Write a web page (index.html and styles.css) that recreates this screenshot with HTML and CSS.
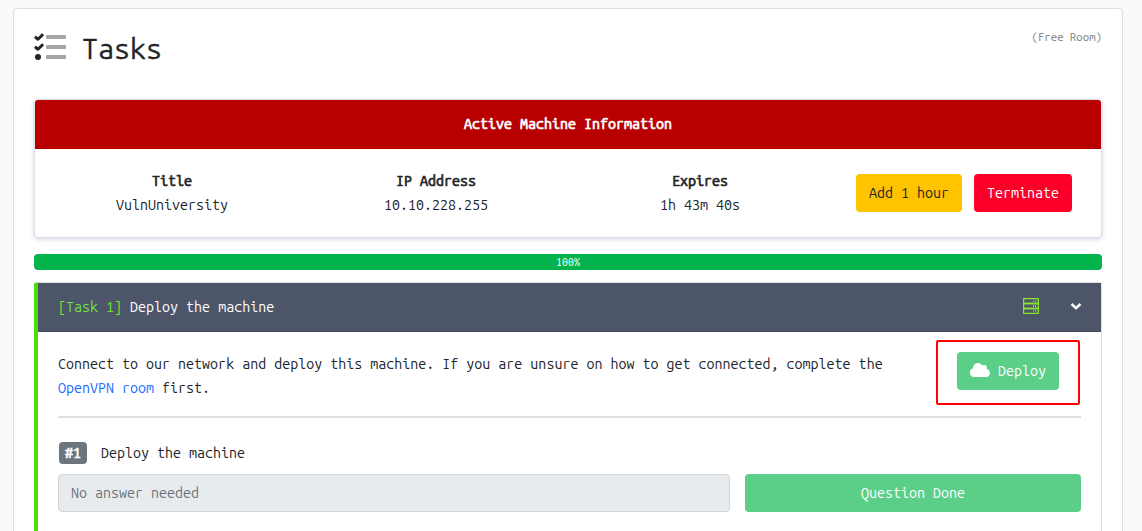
FILE: index.html
```html
<!DOCTYPE html>
<html lang="en">
<head>
<meta charset="utf-8">
<title>Tasks</title>
<link rel="stylesheet" href="styles.css">
</head>
<body>
<main class="room">
  <header class="room-head">
    <svg class="tasks-icon" width="34" height="28" viewBox="0 0 34 28">
      <g fill="#a6a6a6"><rect x="12" y="2" width="20" height="4" rx=".8"/><rect x="12" y="12" width="20" height="4" rx=".8"/><rect x="12" y="22" width="20" height="4" rx=".8"/></g>
      <g fill="none" stroke="#212529" stroke-width="3" stroke-linejoin="round"><path d="M.9 3.8 4 6.2 9.1 1.2"/><path d="M.9 13.8 4 16.2 9.1 11.2"/></g>
      <circle cx="4" cy="24" r="3" fill="#212529"/>
    </svg>
    <h1 class="room-title">Tasks</h1>
    <span class="room-type">(Free Room)</span>
  </header>

  <section class="machine">
    <div class="machine-head">Active Machine Information</div>
    <div class="machine-body">
      <div class="fact"><b>Title</b><span>VulnUniversity</span></div>
      <div class="fact"><b>IP Address</b><span>10.10.228.255</span></div>
      <div class="fact"><b>Expires</b><span>1h 43m 40s</span></div>
      <div class="machine-actions">
        <button class="btn btn-warning">Add 1 hour</button>
        <button class="btn btn-danger">Terminate</button>
      </div>
    </div>
  </section>

  <div class="progress">100%</div>

  <section class="task">
    <div class="task-head">
      <span><span class="task-no">[Task 1]</span> Deploy the machine</span>
      <svg class="server-icon" width="16" height="16" viewBox="0 0 16 16">
        <g fill="none" stroke="#8ae62c" stroke-width="1.3"><rect x=".6" y=".6" width="14.8" height="4.9" rx=".5"/><rect x=".6" y="5.5" width="14.8" height="5" rx=".5"/><rect x=".6" y="10.5" width="14.8" height="4.9" rx=".5"/></g>
        <g fill="#8ae62c"><path d="M10 2.6h1.2v1.2H10zM12 2.6h1.2v1.2H12zM10 7h1v2.2h-1zM12 7h1v2.2h-1zM10 12.2h1.2v1.2H10zM12 12.2h1.2v1.2H12z"/></g>
      </svg>
      <svg class="chevron" width="12" height="8" viewBox="0 0 12 8"><path d="M1.5 2 6 6.1 10.5 2" fill="none" stroke="#fff" stroke-width="2.6"/></svg>
    </div>
    <div class="task-body">
      <div class="intro">
        <p class="intro-text">Connect to our network and deploy this machine. If you are unsure on how to get connected, complete the <a class="link" href="#">OpenVPN room</a> first.</p>
        <div class="deploy">
          <button class="btn btn-success btn-deploy">
            <svg width="20" height="14" viewBox="0 0 20 14"><path fill="#fff" d="M16.8 6.1c.2-.4.2-.8.2-1.2a3 3 0 0 0-4.7-2.4A5 5 0 0 0 3 5v.2A4.5 4.5 0 0 0 4.5 14H16a4 4 0 0 0 .8-7.9z"/></svg>
            Deploy
          </button>
          <span class="marker"></span>
        </div>
      </div>
      <div class="question"><span class="badge">#1</span><span>Deploy the machine</span></div>
      <div class="answer">
        <input class="field" placeholder="No answer needed" disabled>
        <button class="btn btn-success">Question Done</button>
      </div>
    </div>
  </section>
</main>
</body>
</html>
```
FILE: styles.css
```css
* { box-sizing: border-box; }
body {
  margin: 0;
  padding: 8px 19px 0 13px;
  background: #fafafa;
  color: #212529;
  font: 14.3px/24px "Ubuntu Mono", "DejaVu Sans Mono", monospace;
}
.room {
  height: 523px;
  padding: 20px 20px 0;
  background: #fff;
  border: 1px solid #dfdfdf;
  border-bottom: 0;
  border-radius: 4px 4px 0 0;
}
.room-head { display: flex; height: 70px; align-items: flex-start; }
.tasks-icon { margin-top: 4px; }
.room-title {
  margin: 0 0 0 14px;
  font-size: 28.6px;
  font-weight: 400;
  line-height: 38px;
  -webkit-text-stroke: .3px;
}
.room-type { margin-left: auto; margin-top: -4px; color: #7d7d7d; font-size: 11.45px; }
.machine {
  border: 1px solid #dfdfe4;
  border-radius: 4px;
  box-shadow: 0 1px 4px rgba(60, 70, 140, .25);
}
.machine-head,
.fact b,
.badge {
  font-weight: 400;
  -webkit-text-stroke: .7px;
}
.machine-head {
  height: 49px;
  line-height: 49px;
  background: #b80000;
  border-radius: 3px 3px 0 0;
  color: #fff;
  text-align: center;
}
.machine-body { display: grid; grid-template-columns: repeat(4, 1fr); height: 88px; padding: 20px 5px; }
.fact { display: flex; flex-direction: column; align-items: center; }
.machine-actions { display: flex; justify-content: center; gap: 12px; padding-top: 5px; }
.btn {
  height: 38px;
  padding: 0 13px;
  border: 0;
  border-radius: 4px;
  color: #fff;
  font: inherit;
  white-space: nowrap;
}
.btn-warning { background: #ffc300; color: #212529; }
.btn-danger { background: #fc0029; }
.btn-success { background: #5bce88; }
.progress {
  height: 16px;
  margin: 16px 0 12px;
  background: #03b34b;
  border-radius: 4px;
  color: #fff;
  font-size: 10.714px;
  line-height: 17px;
  text-align: center;
}
.task {
  height: 249px;
  border: 1px solid #dfdfdf;
  border-bottom: 0;
  border-left: 4px solid #4cdc0a;
  border-radius: 3px 3px 0 0;
}
.task-head {
  display: flex;
  align-items: center;
  height: 49px;
  padding: 0 19px 0 20px;
  background: #4d5569;
  border-bottom: 1px solid #434b60;
  color: #fff;
}
.task-no { color: #70e43c; }
.server-icon { margin: -2px 31px 0 auto; }
.chevron { margin-top: -2px; }
.task-body { padding: 20px 20px 0; }
.intro {
  display: flex;
  justify-content: space-between;
  height: 66px;
  border-bottom: 2px solid #dfdfdf;
}
.intro-text { width: 850px; margin: 0; }
.link { color: #1a6cff; text-decoration: none; }
.deploy { position: relative; margin-right: 22px; }
.btn-deploy { display: flex; align-items: center; gap: 8px; width: 102px; }
.btn-deploy svg { margin-top: -2px; flex: none; }
.marker {
  position: absolute;
  inset: -12px -21px auto;
  height: 65px;
  border: 2px solid #fb0007;
  border-radius: 2px;
}
.question { display: flex; align-items: center; gap: 14px; height: 24px; margin: 23px 0 9px 1px; }
.badge {
  width: 28px;
  height: 22px;
  background: #6c757d;
  border-radius: 4px;
  color: #fff;
  line-height: 22px;
  text-align: center;
}
.answer { display: grid; grid-template-columns: 672px 1fr; gap: 15px; }
.field {
  height: 38px;
  padding: 0 12px;
  background: #e8ebee;
  border: 1px solid #ced4da;
  border-radius: 4px;
  font: inherit;
}
.field::placeholder { color: #6c757d; opacity: 1; }
```
